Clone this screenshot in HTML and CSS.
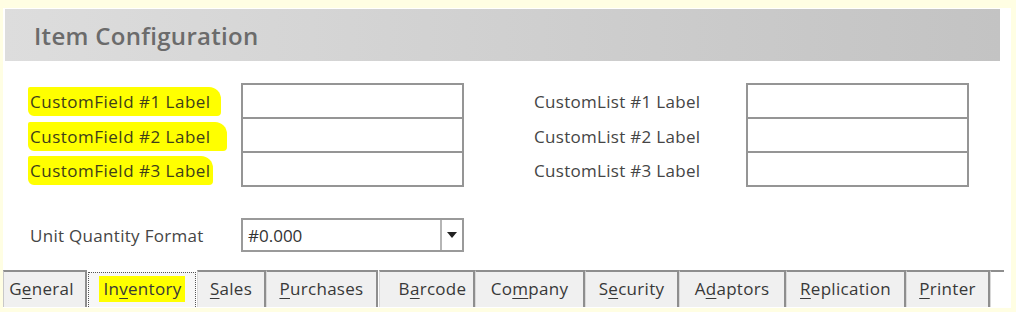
FILE: index.html
```html
<!DOCTYPE html>
<html lang="en">
<head>
<meta charset="utf-8">
<title>Item Configuration</title>
<link rel="stylesheet" href="styles.css">
</head>
<body>
<div class="panel">
  <div class="header"><h1 class="title">Item Configuration</h1></div>

  <div class="fields">
    <div class="label"><span class="mark">CustomField #1 Label</span></div>
    <div class="box box-first"></div>
    <div class="spacer"></div>
    <div class="label">CustomList #1 Label</div>
    <div class="box box-first"></div>

    <div class="label"><span class="mark mark-wide">CustomField #2 Label</span></div>
    <div class="box"></div>
    <div class="spacer"></div>
    <div class="label">CustomList #2 Label</div>
    <div class="box"></div>

    <div class="label"><span class="mark mark-short">CustomField #3 Label</span></div>
    <div class="box"></div>
    <div class="spacer"></div>
    <div class="label">CustomList #3 Label</div>
    <div class="box"></div>
  </div>

  <div class="unit-row">
    <div class="label">Unit Quantity Format</div>
    <div class="select">
      <span class="select-value">#0.000</span>
      <span class="select-btn"><span class="arrow"></span></span>
    </div>
  </div>

  <div class="tabs">
    <div class="tab t-general">G<u>e</u>neral</div>
    <div class="tab tab-active t-inventory"><span class="tab-mark">In<u>v</u>entory</span></div>
    <div class="tab t-sales"><u>S</u>ales</div>
    <div class="tab t-purchases"><u>P</u>urchases</div>
    <div class="tab t-barcode">B<u>a</u>rcode</div>
    <div class="tab t-company">Co<u>m</u>pany</div>
    <div class="tab t-security">S<u>e</u>curity</div>
    <div class="tab t-adaptors">A<u>d</u>aptors</div>
    <div class="tab t-replication"><u>R</u>eplication</div>
    <div class="tab t-printer"><u>P</u>rinter</div>
    <div class="tab t-more"></div>
  </div>
</div>
</body>
</html>
```

FILE: styles.css
```css
html, body {
  margin: 0;
  padding: 0;
}

body {
  background: #fffee3;
  width: 1016px;
  height: 312px;
  overflow: hidden;
  font-family: "Open Sans", "Noto Sans", "DejaVu Sans", sans-serif;
}

.panel {
  margin: 8px 0 0 3px;
  width: 1008px;
  height: 300px;
  background: #ffffff;
  display: flex;
  flex-direction: column;
}

.header {
  margin: 1px 0 0 2px;
  width: 995px;
  height: 52px;
  background: linear-gradient(to right, #dddddd, #c3c3c3);
  display: flex;
  align-items: center;
}

.title {
  margin: 0 0 0 29px;
  font-size: 24px;
  font-weight: 600;
  color: #6b6b6b;
  letter-spacing: 0.3px;
}

.fields {
  margin: 22px 0 0 27px;
  display: grid;
  grid-template-columns: 211px 223px 70px 212px 223px;
  grid-template-rows: 36px 34px 34px;
}

.label {
  display: flex;
  align-items: center;
  font-size: 17px;
  font-weight: 500;
  letter-spacing: 0.3px;
  color: #454545;
  white-space: nowrap;
}

.mark {
  display: inline-block;
  background: #ffff00;
  margin-left: -2px;
  padding: 3px 10px 3px 2px;
  border-radius: 2px 12px 4px 6px;
  letter-spacing: 0.5px;
  color: #3e3e1a;
}

.mark-wide {
  padding-right: 16px;
}

.mark-short {
  padding-right: 2px;
}

.box {
  border: 2px solid #959595;
  border-top: 0;
  background: #ffffff;
}

.box-first {
  border-top: 2px solid #959595;
}

.unit-row {
  margin: 31px 0 0 27px;
  display: grid;
  grid-template-columns: 211px 223px;
  height: 34px;
}

.select {
  border: 2px solid #9a9a9a;
  display: flex;
  align-items: center;
}

.select-value {
  flex: 1;
  padding-left: 5px;
  font-size: 17px;
  color: #333333;
}

.select-btn {
  width: 20px;
  height: 100%;
  border-left: 2px solid #b5b5b5;
  display: flex;
  align-items: center;
  justify-content: center;
}

.arrow {
  width: 0;
  height: 0;
  border-left: 5px solid transparent;
  border-right: 5px solid transparent;
  border-top: 6px solid #222222;
}

.tabs {
  margin-top: 18px;
  display: flex;
  height: 37px;
}

.tab {
  box-sizing: border-box;
  height: 37px;
  padding-bottom: 2px;
  border-top: 2px solid #8e8e8e;
  border-left: 1px solid #d8d8d8;
  border-right: 2px solid #8e8e8e;
  background: #f0f0f0;
  display: flex;
  align-items: center;
  justify-content: center;
  font-size: 17px;
  letter-spacing: 0.3px;
  color: #383838;
  white-space: nowrap;
}

.tab u {
  text-underline-offset: 3px;
}

.tab-active {
  border: 1px dotted #555555;
  border-bottom: 0;
  background: #f7f7f7;
  margin: 2px 1px 0 1px;
  height: 35px;
}

.tab-mark {
  background: #ffff00;
  padding: 1px 3px 2px 4px;
}

.t-general { width: 84px; border-left: 1px solid #c8c8c8; padding-right: 6px; }
.t-inventory { width: 108px; }
.t-sales { width: 69px; }
.t-purchases { width: 112px; }
.t-barcode { width: 96px; padding-left: 12px; margin-left: 1px; }
.t-company { width: 110px; }
.t-security { width: 94px; }
.t-adaptors { width: 107px; }
.t-replication { width: 120px; }
.t-printer { width: 84px; }
.t-more { width: 14px; background: #ffffff; border-right: 0; }
```
